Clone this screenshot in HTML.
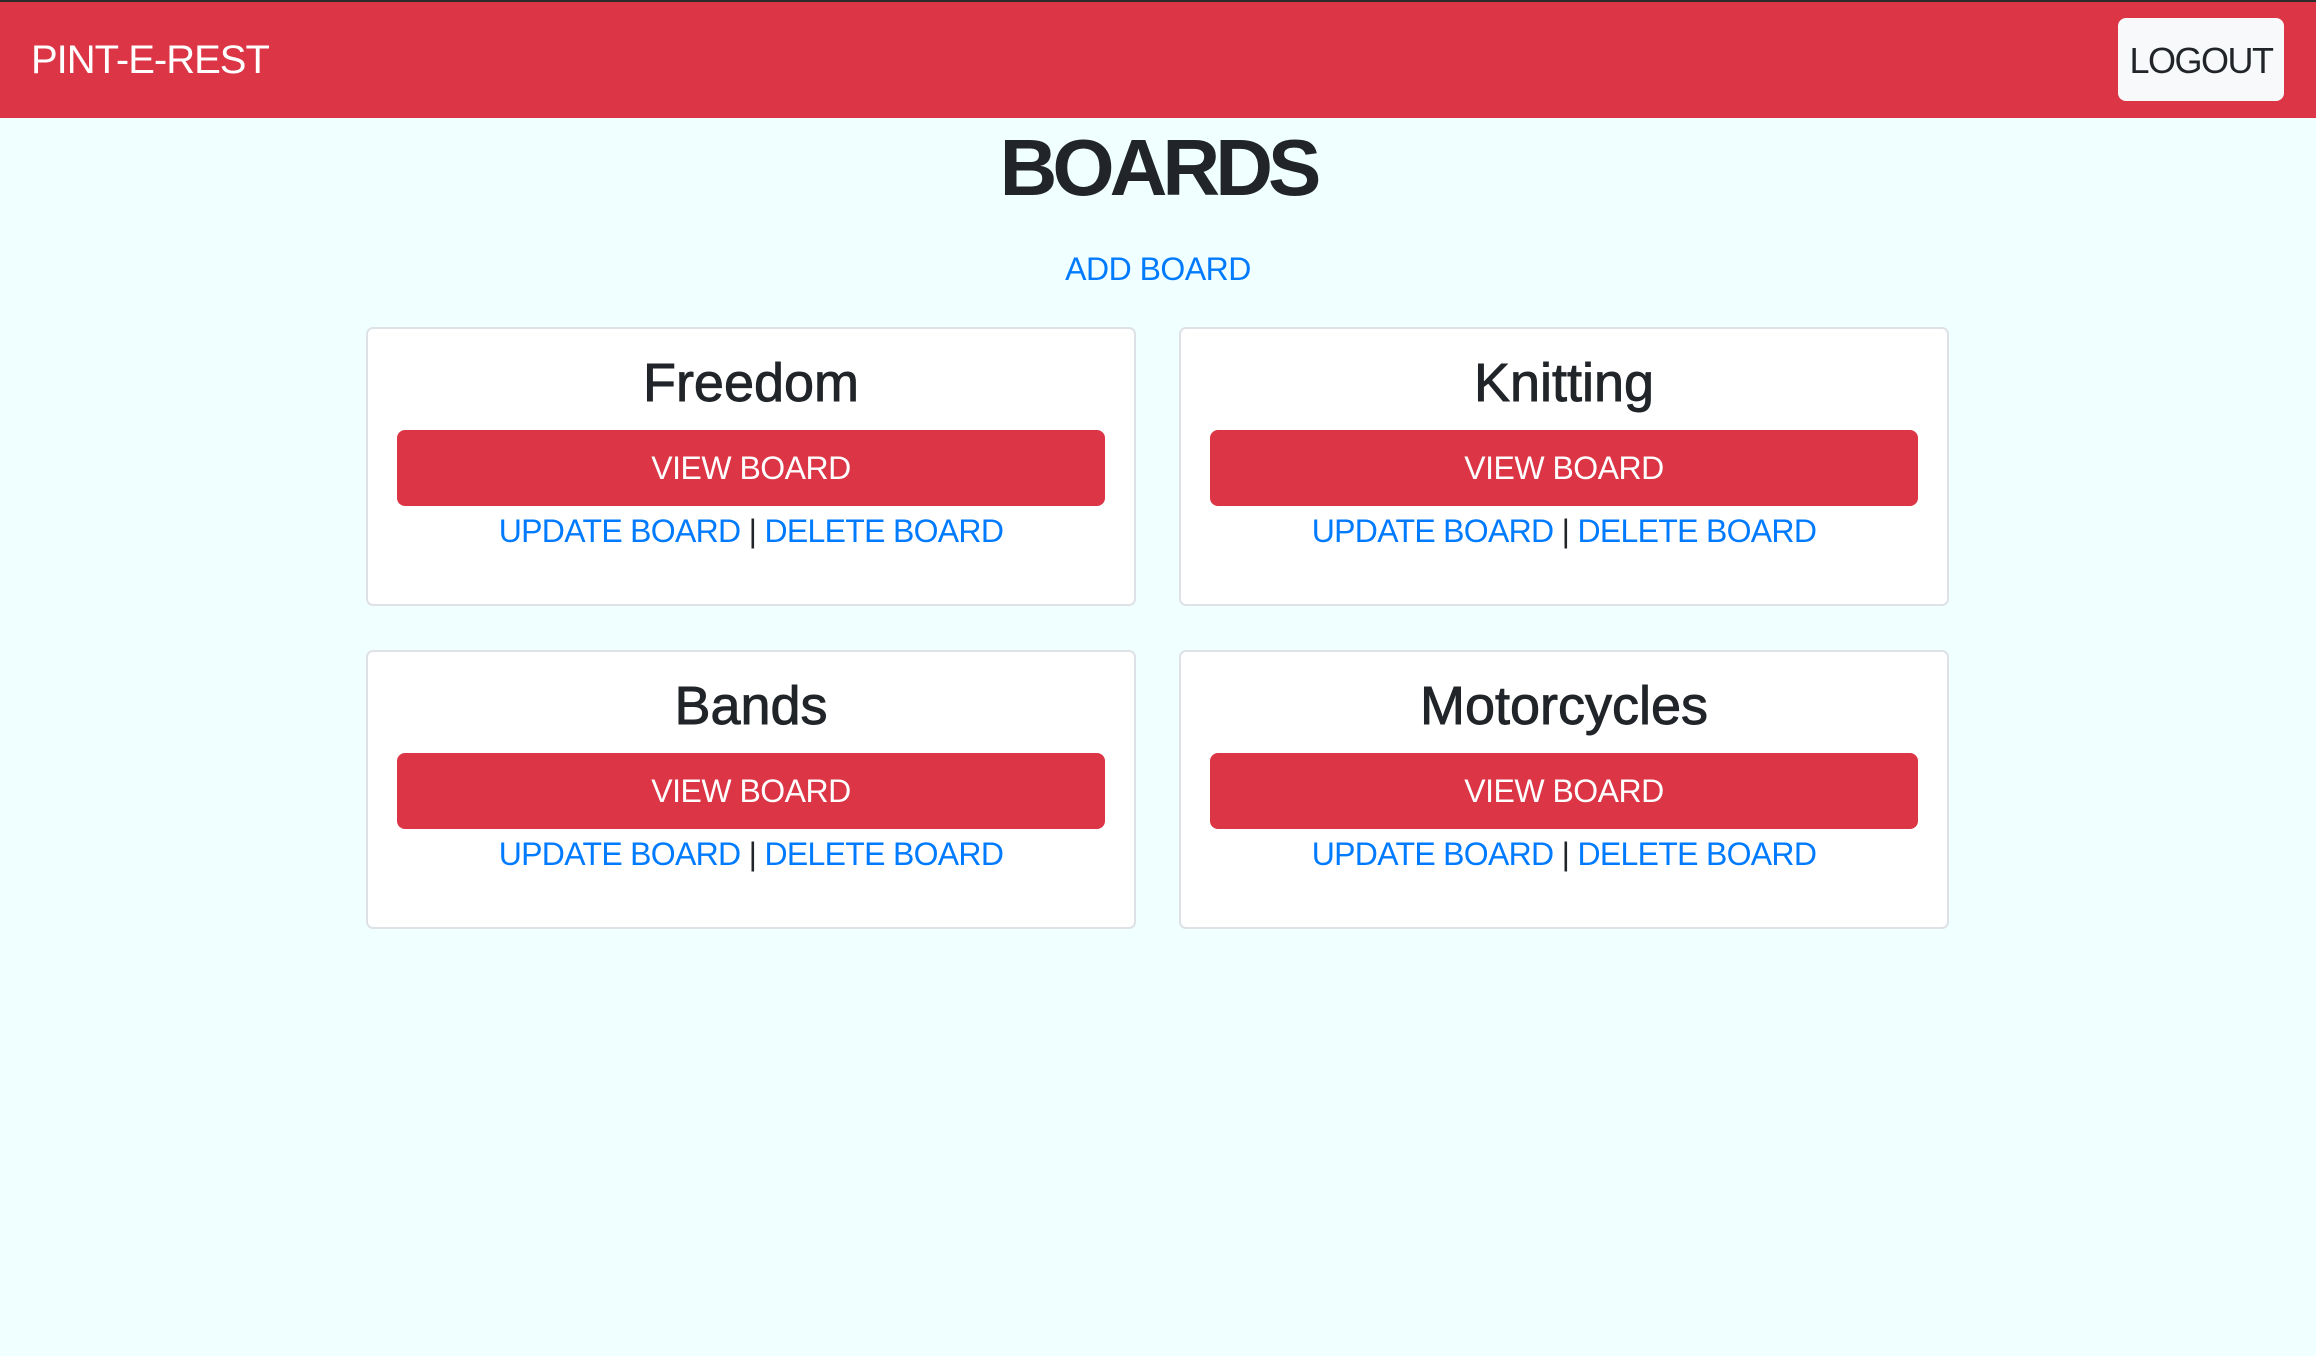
<!DOCTYPE html>
<html><head><meta charset="utf-8"><style>
*{margin:0;padding:0;box-sizing:border-box}
body{width:2316px;height:1356px;background:#f0ffff;font-family:"Liberation Sans",Arial,sans-serif;position:relative;overflow:hidden;color:#212529}
.nav{position:absolute;left:0;top:0;width:2316px;height:118px;background:#dc3545;border-top:2px solid #2b2b2b}
.abs{position:absolute;line-height:1;white-space:nowrap}
.brand{left:31px;top:40px;font-size:40px;color:#fff;letter-spacing:-1px}
.logout{position:absolute;left:2118px;top:18px;width:166px;height:83px;background:#f8f9fa;border-radius:8px}
.logout span{position:absolute;left:0;right:0;top:25px;text-align:center;font-size:36px;line-height:1;color:#212529;letter-spacing:-1.5px}
.h1{left:0;width:2316px;text-align:center;top:128px;font-size:80px;font-weight:bold;letter-spacing:-5px}
.add{left:0;width:2316px;text-align:center;top:253px;font-size:32px;color:#007bff;letter-spacing:-0.5px}
.card{position:absolute;width:770px;height:279px;background:#fff;border:2px solid #dee2e6;border-radius:7px}
.card .t{position:absolute;left:0;right:0;top:27px;text-align:center;font-size:54px;line-height:1;color:#212529;-webkit-text-stroke:0.9px #212529}
.card .b{position:absolute;left:29px;right:29px;top:101px;height:76px;background:#dc3545;border-radius:8px}
.card .b span{position:absolute;left:0;right:0;top:22px;text-align:center;font-size:32px;line-height:1;color:#fff;letter-spacing:-0.5px}
.card .l{position:absolute;left:0;right:0;top:186px;text-align:center;font-size:32px;line-height:1;color:#212529;letter-spacing:-0.7px}
.card .l a{color:#007bff;text-decoration:none}
</style></head><body>
<div class="nav"></div>
<div class="abs brand">PINT-E-REST</div>
<div class="logout"><span>LOGOUT</span></div>
<div class="abs h1">BOARDS</div>
<div class="abs add">ADD BOARD</div>

<div class="card" style="left:366px;top:327px"><div class="t">Freedom</div><div class="b"><span>VIEW BOARD</span></div><div class="l"><a>UPDATE BOARD</a> | <a>DELETE BOARD</a></div></div>
<div class="card" style="left:1179px;top:327px"><div class="t">Knitting</div><div class="b"><span>VIEW BOARD</span></div><div class="l"><a>UPDATE BOARD</a> | <a>DELETE BOARD</a></div></div>
<div class="card" style="left:366px;top:650px"><div class="t">Bands</div><div class="b"><span>VIEW BOARD</span></div><div class="l"><a>UPDATE BOARD</a> | <a>DELETE BOARD</a></div></div>
<div class="card" style="left:1179px;top:650px"><div class="t">Motorcycles</div><div class="b"><span>VIEW BOARD</span></div><div class="l"><a>UPDATE BOARD</a> | <a>DELETE BOARD</a></div></div>
</body></html>
